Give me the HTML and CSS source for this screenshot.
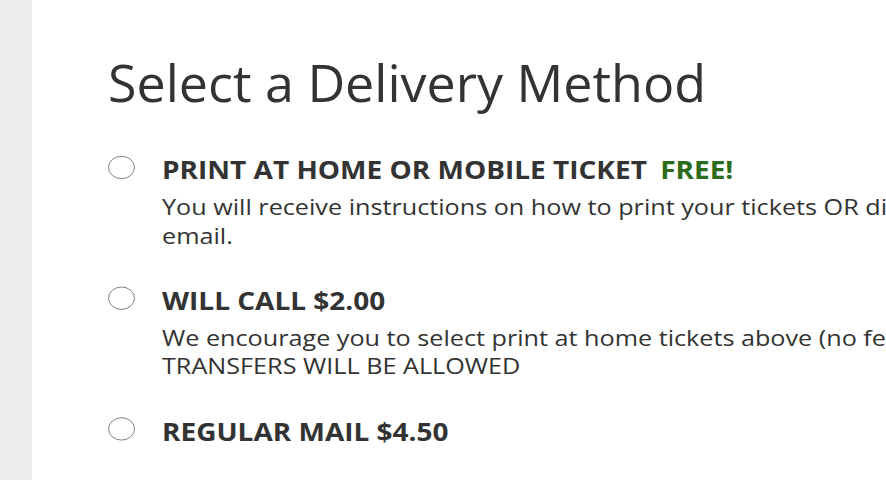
FILE: index.html
```html
<!DOCTYPE html>
<html lang="en">
<head>
  <meta charset="UTF-8" />
  <meta name="viewport" content="width=device-width, initial-scale=1.0" />
  <title>Delivery Method</title>
  <link rel="stylesheet" href="styles.css">
</head>
<body>
  <aside class="side"></aside>

  <main class="content">
    <h1>Select a Delivery Method</h1>

    <form class="methods">
      <label class="method">
        <input type="radio" name="delivery" value="print">
        <span class="text">
          <span class="title">PRINT AT HOME OR MOBILE TICKET <span class="free">FREE!</span></span>
          <span class="desc">You will receive instructions on how to print your tickets OR display them on your mobile device via<br>email.</span>
        </span>
      </label>

      <label class="method">
        <input type="radio" name="delivery" value="willcall">
        <span class="text">
          <span class="title">WILL CALL $2.00</span>
          <span class="desc">We encourage you to select print at home tickets above (no fees). A photo ID is required at pickup. NO<br>TRANSFERS WILL BE ALLOWED</span>
        </span>
      </label>

      <label class="method">
        <input type="radio" name="delivery" value="mail">
        <span class="text">
          <span class="title">REGULAR MAIL $4.50</span>
        </span>
      </label>
    </form>
  </main>
</body>
</html>
```

FILE: styles.css
```css
html, body {
  height: 100%;
}
body {
  margin: 0;
  font-family: "Open Sans", Arial, sans-serif;
  color: #333;
  background: #fff;
  display: flex;
  overflow: hidden;
}
.side {
  flex: 0 0 32px;
  background: #ededed;
}
.content {
  flex: 0 0 auto;
  width: 1400px;
  padding: 51px 0 0 76px;
}
h1 {
  font-size: 52px;
  font-weight: 400;
  line-height: 1.2;
  margin: 0 0 42px;
}

/* options list is a bit flatter than the type, so squeeze it vertically */
.methods {
  display: flex;
  flex-direction: column;
  gap: 42.5px;
  transform: scaleY(0.86);
  transform-origin: top left;
}
.method {
  display: flex;
  align-items: flex-start;
  gap: 27px;
  cursor: pointer;
}
.method input {
  appearance: none;
  box-sizing: border-box;
  flex: 0 0 27px;
  width: 27px;
  height: 27px;
  margin: 1px 0 0;
  border: 1.7px solid #767676;
  border-radius: 50%;
  background: #fff;
}
.method input:checked {
  background: radial-gradient(#333 45%, #fff 48%);
}
.text {
  display: flex;
  flex-direction: column;
}
.title {
  font-size: 28px;
  font-weight: 700;
  line-height: 34px;
}
.free {
  color: #2b6b19;
  margin-left: 6px;
}
.desc {
  font-size: 25.2px;
  line-height: 33px;
  margin-top: 9.5px;
}
```
